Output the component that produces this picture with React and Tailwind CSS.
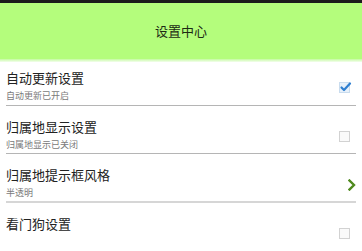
import React from 'react';

const settings = [
  { title: '自动更新设置', desc: '自动更新已开启', control: 'checked' },
  { title: '归属地显示设置', desc: '归属地显示已关闭', control: 'unchecked' },
  { title: '归属地提示框风格', desc: '半透明', control: 'arrow' },
  { title: '看门狗设置', desc: null, control: 'unchecked' },
];

function CheckBox({ checked }) {
  return (
    <svg width="14" height="14" viewBox="0 0 14 14" className="block">
      <rect x="1.5" y="2.5" width="10" height="10" fill={checked ? '#e8f1fa' : '#fafafa'} stroke={checked ? '#c9dcee' : '#d2d2d2'} strokeWidth="1" />
      {checked && (
        <path d="M3.5 7.5 L6 10 L12 3.5" fill="none" stroke="#2f7fd0" strokeWidth="2.2" strokeLinecap="round" strokeLinejoin="round" />
      )}
    </svg>
  );
}

function Chevron() {
  return (
    <svg width="8" height="12" viewBox="0 0 8 12" className="block">
      <path d="M1.5 1.5 L6 6 L1.5 10.5" fill="none" stroke="#4f8a1e" strokeWidth="2.4" strokeLinecap="square" />
    </svg>
  );
}

export default function App() {
  return (
    <div
      className="w-[362px] h-[251px] bg-white overflow-hidden"
      style={{ fontFamily: '"Noto Sans CJK SC", "Noto Sans", sans-serif' }}
    >
      {/* header */}
      <div className="h-[3px] bg-[#1b1b1b]" />
      <div className="h-[56px] bg-[#b4fd7c] flex items-center justify-center">
        <span className="text-[13px] leading-4 text-[#1d2a14]">设置中心</span>
      </div>
      <div className="h-[3px] bg-gradient-to-b from-[#c4fa9e] to-[#f4fdee]" />

      {settings.map((item, i) => (
        <div key={item.title}>
          <div
            className={
              'flex items-start pl-[6px] pr-[10px] ' +
              (i === 0 ? 'pt-[8px] pb-[3px]' : 'pt-[13px] pb-[2px]')
            }
          >
            <div className="flex-1 min-w-0">
              <div className="text-[13px] leading-4 text-[#222]">{item.title}</div>
              {item.desc && (
                <div className="mt-[3px] text-[9px] leading-[13px] text-[#7a7a7a]">{item.desc}</div>
              )}
            </div>
            <div className={item.control === 'arrow' ? 'mt-[12px] mr-[-4px]' : 'mt-[10px]'}>
              {item.control === 'arrow' ? <Chevron /> : <CheckBox checked={item.control === 'checked'} />}
            </div>
          </div>
          {i < 2 && <div className="mx-[6px] h-px bg-[#b5b5b5]" />}
          {i === 2 && <div className="mx-[6px] h-[2px] bg-[#d6d6d6]" />}
        </div>
      ))}
    </div>
  );
}
